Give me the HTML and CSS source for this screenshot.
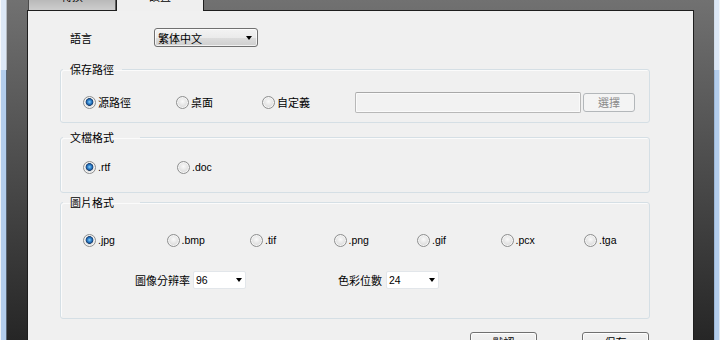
FILE: index.html
```html
<!DOCTYPE html>
<html lang="zh-Hant">
<head>
<meta charset="utf-8">
<title>設置</title>
<link rel="stylesheet" href="styles.css">
</head>
<body>
<div class="win">
  <div class="edge edge-l"></div>
  <div class="main">
    <div class="tabs">
      <div class="tab tab-off"><span class="tab-text">轉換</span></div>
      <div class="tab tab-on"><span class="tab-text">設置</span></div>
    </div>
    <div class="panel">
      <div class="lang-row">
        <span class="lang-label">語言</span>
        <div class="combo"><span>繁体中文</span><i class="arrow"></i></div>
      </div>

      <fieldset class="grp grp-path">
        <legend>保存路徑</legend>
        <div class="path-row">
          <label class="radio w93"><span class="rb on"></span><span class="rt">源路徑</span></label>
          <label class="radio w86"><span class="rb"></span><span class="rt">桌面</span></label>
          <label class="radio w93"><span class="rb"></span><span class="rt">自定義</span></label>
          <div class="path-input"></div>
          <div class="btn-pick">選擇</div>
        </div>
      </fieldset>

      <fieldset class="grp grp-doc">
        <legend>文檔格式</legend>
        <div class="doc-row">
          <label class="radio w94"><span class="rb on"></span><span class="rt lat">.rtf</span></label>
          <label class="radio"><span class="rb"></span><span class="rt lat">.doc</span></label>
        </div>
      </fieldset>

      <fieldset class="grp grp-img">
        <legend>圖片格式</legend>
        <div class="img-row">
          <label class="radio"><span class="rb on"></span><span class="rt lat">.jpg</span></label>
          <label class="radio"><span class="rb"></span><span class="rt lat">.bmp</span></label>
          <label class="radio"><span class="rb"></span><span class="rt lat">.tif</span></label>
          <label class="radio"><span class="rb"></span><span class="rt lat">.png</span></label>
          <label class="radio"><span class="rb"></span><span class="rt lat">.gif</span></label>
          <label class="radio"><span class="rb"></span><span class="rt lat">.pcx</span></label>
          <label class="radio"><span class="rb"></span><span class="rt lat">.tga</span></label>
        </div>
        <div class="opt-row">
          <span class="opt-label opt-dpi">圖像分辨率</span>
          <div class="sel"><span class="lat">96</span><i class="arrow"></i></div>
          <span class="opt-label opt-bits">色彩位數</span>
          <div class="sel sel-bits"><span class="lat">24</span><i class="arrow"></i></div>
        </div>
      </fieldset>

      <div class="btn-row">
        <div class="btn">默認</div>
        <div class="btn">保存</div>
      </div>
    </div>
  </div>
  <div class="edge edge-r"></div>
</div>
</body>
</html>
```

FILE: styles.css
```css
* { box-sizing: border-box; }
html, body { margin: 0; padding: 0; }
body {
  width: 720px;
  height: 340px;
  overflow: hidden;
  font-family: "Liberation Sans", "Noto Sans CJK TC", sans-serif;
  font-size: 11px;
  color: #000;
}
.win {
  display: flex;
  width: 720px;
  height: 340px;
}
.edge { flex: none; height: 340px; }
.edge-l {
  width: 7px;
  background:
    linear-gradient(to bottom, rgba(255,255,255,0.55) 0 70px, rgba(255,255,255,0) 70px),
    linear-gradient(to right, #eef2f7 0 1px, #b3cdec 1px 6px, #596470 6px);
}
.edge-r {
  width: 6px;
  background:
    linear-gradient(to bottom, rgba(255,255,255,0.55) 0 70px, rgba(255,255,255,0) 70px),
    linear-gradient(to right, #9db8d8 0 1px, #b3cdec 1px 5px, #dfe8f2 5px);
}
.main {
  flex: 1;
  height: 340px;
  padding: 0 20px;
  background: linear-gradient(to bottom, #717171, #262626);
  display: flex;
  flex-direction: column;
}
.tabs {
  display: flex;
  height: 10px;
  padding-left: 1px;
  flex: none;
}
.tab {
  width: 88px;
  height: 10px;
  overflow: hidden;
  display: flex;
  justify-content: center;
  font-family: "Noto Sans CJK TC", sans-serif;
  font-size: 11px;
  line-height: 12px;
}
.tab-text { margin-top: -10px; }
.tab-off {
  background: linear-gradient(to bottom, #b9b9b9, #cdcdcd);
  border-left: 1px solid #4a4a4a;
  border-right: 1px solid #5e5e5e;
}
.tab-on {
  width: 88px;
  height: 11px;
  margin-bottom: -1px;
  position: relative;
  z-index: 1;
  background: #efefef;
  border-left: 1px solid #1e1e1e;
  border-right: 1px solid #1e1e1e;
}
.panel {
  flex: 1;
  background: #f0f0f0;
  border: 1px solid #1e1e1e;
  border-bottom: none;
  overflow: hidden;
  padding-top: 17px;
}
.lang-row {
  display: flex;
  align-items: center;
  height: 19px;
  padding-left: 42px;
}
.lang-label {
  width: 84px;
  font-family: "Noto Sans CJK TC", sans-serif;
  line-height: 12px;
}
.combo {
  width: 104px;
  height: 19px;
  border: 1px solid #707070;
  border-radius: 3px;
  background: linear-gradient(to bottom, #f3f3f3 0%, #ebebeb 50%, #dddddd 51%, #cfcfcf 100%);
  display: flex;
  align-items: center;
  padding-left: 3px;
  font-family: "Noto Sans CJK TC", sans-serif;
  line-height: 12px;
  box-shadow: inset 0 0 0 1px rgba(255,255,255,0.7);
}
.arrow {
  margin-left: auto;
  margin-right: 5px;
  width: 0;
  height: 0;
  border-left: 3.5px solid transparent;
  border-right: 3.5px solid transparent;
  border-top: 4px solid #000;
}

.grp {
  margin: 0 0 0 32px;
  width: 590px;
  min-width: 0;
  border: 1px solid #d5dfe5;
  border-radius: 3px;
  padding: 0 2px;
  box-shadow: inset 1px 1px 0 #fbfbfb;
}
.grp legend {
  padding: 0 8px 0 7px;
  font-family: "Noto Sans CJK TC", sans-serif;
  font-size: 11px;
  line-height: 12px;
}
.grp-doc legend, .grp-img legend { padding-right: 26px; }
.grp-path { margin-top: 16px; padding-bottom: 9px; }
.grp-doc { margin-top: 8px; padding-bottom: 18px; }
.grp-img { margin-top: 3px; padding-bottom: 29px; }

.radio {
  display: flex;
  align-items: center;
  height: 14px;
  flex: none;
}
.w93 { width: 93px; }
.w86 { width: 86px; }
.w94 { width: 94px; }
.rb {
  flex: none;
  width: 13px;
  height: 13px;
  border-radius: 50%;
  border: 1px solid #8e8f8f;
  background: radial-gradient(circle at 50% 40%, #fafafa 0, #e6e6e6 45%, #cfcfcf 100%);
  box-shadow: inset 0 0 0 1px #f6f6f6;
}
.rb.on {
  background:
    radial-gradient(circle at 50% 45%, #8fd0f7 0, #3a8fd6 1.6px, #1d5fa8 2.8px, #1e3f66 3.6px, rgba(30,63,102,0) 4.2px),
    radial-gradient(circle at 50% 40%, #fafafa 0, #e6e6e6 45%, #cfcfcf 100%);
}
.rt {
  margin-left: 2px;
  font-family: "Noto Sans CJK TC", sans-serif;
  line-height: 12px;
}
.rt.lat, .lat {
  font-family: "Liberation Sans", sans-serif;
  font-size: 10.5px;
}

.path-row {
  display: flex;
  align-items: center;
  height: 22px;
  margin-top: 16px;
  margin-left: 20px;
}
.path-input {
  width: 226px;
  height: 21px;
  border: 1px solid #b8b8b8;
  border-top-color: #a8a8a8;
  border-radius: 2px;
  background: #f2f2f2;
  box-shadow: inset 0 0 0 1px #fafafa;
}
.btn-pick {
  margin-left: 2px;
  width: 52px;
  height: 19px;
  border: 1px solid #b3b7ba;
  border-radius: 3px;
  background: #f4f4f4;
  color: #8a8a8a;
  display: flex;
  align-items: center;
  justify-content: center;
  font-family: "Noto Sans CJK TC", sans-serif;
  line-height: 12px;
}

.doc-row {
  display: flex;
  margin-top: 17px;
  margin-left: 20px;
}

.img-row {
  display: grid;
  grid-template-columns: repeat(6, 83.5px) 50px;
  margin-top: 25px;
  margin-left: 20px;
}
.opt-row {
  display: flex;
  align-items: center;
  height: 18px;
  margin-top: 24px;
}
.opt-label {
  font-family: "Noto Sans CJK TC", sans-serif;
  line-height: 12px;
}
.opt-dpi { margin-left: 72px; }
.opt-bits { margin-left: 92px; }
.sel {
  margin-left: 3px;
  width: 53px;
  height: 18px;
  background: #fff;
  border: 1px solid #e2e6ea;
  border-radius: 2px;
  display: flex;
  align-items: center;
  padding-left: 2px;
}
.sel-bits { margin-left: 4px; }
.sel .arrow { margin-right: 3px; }

.btn-row {
  display: flex;
  gap: 45px;
  margin-top: 13px;
  margin-left: 442px;
}
.btn {
  width: 67px;
  height: 23px;
  border: 1px solid #707070;
  border-radius: 3px;
  background: linear-gradient(to bottom, #f2f2f2 0%, #ebebeb 50%, #dddddd 51%, #cfcfcf 100%);
  box-shadow: inset 0 0 0 1px rgba(255,255,255,0.8);
  display: flex;
  justify-content: center;
  padding-top: 3px;
  font-family: "Noto Sans CJK TC", sans-serif;
  line-height: 12px;
}
```
